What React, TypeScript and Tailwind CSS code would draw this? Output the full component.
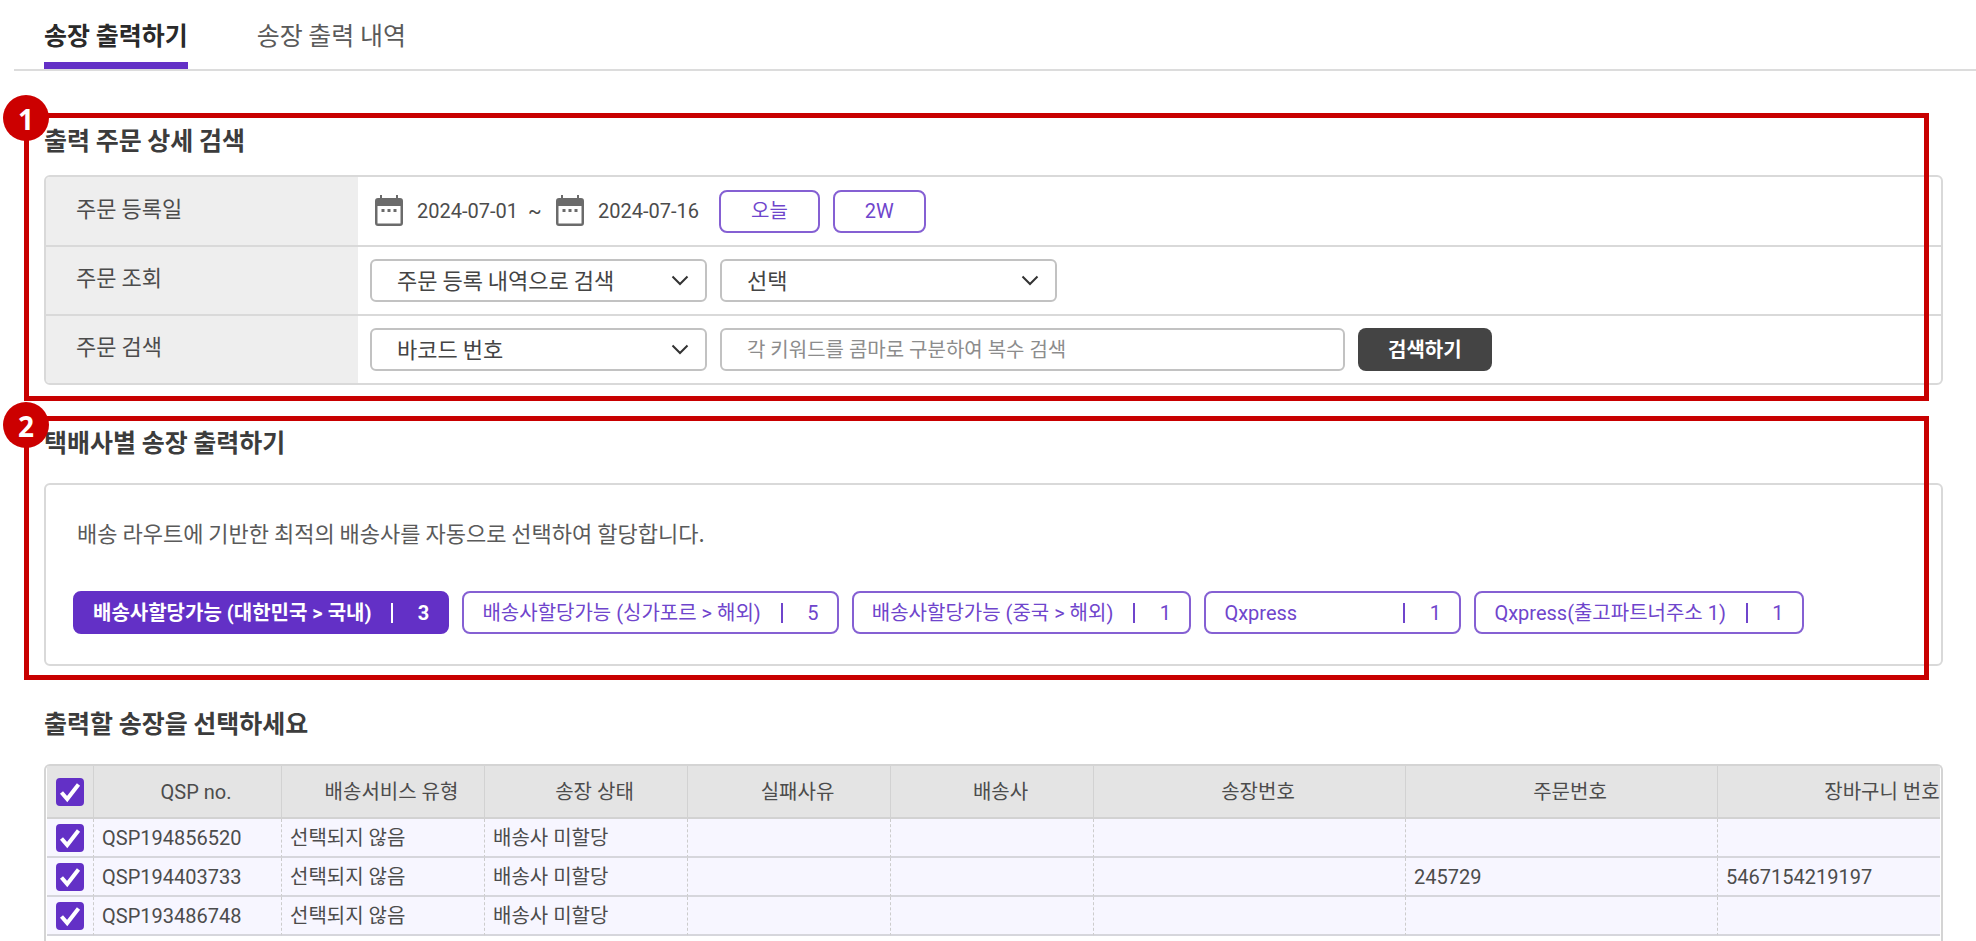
import { useState } from "react";
import type { ReactNode } from "react";
import clsx from "clsx";

type Carrier = {
  label: string;
  count: number;
  wide?: boolean;
};

type Order = {
  qspNo: string;
  serviceType: string;
  status: string;
  failReason?: string;
  carrier?: string;
  invoiceNo?: string;
  orderNo?: string;
  cartNo?: string;
};

const TABS = ["송장 출력하기", "송장 출력 내역"];

const CARRIERS: Carrier[] = [
  { label: "배송사할당가능 (대한민국 > 국내)", count: 3 },
  { label: "배송사할당가능 (싱가포르 > 해외)", count: 5 },
  { label: "배송사할당가능 (중국 > 해외)", count: 1 },
  { label: "Qxpress", count: 1, wide: true },
  { label: "Qxpress(출고파트너주소 1)", count: 1 },
];

const COLUMNS = [
  { title: "QSP no.", width: "w-[188px]" },
  { title: "배송서비스 유형", width: "w-[203px]" },
  { title: "송장 상태", width: "w-[203px]" },
  { title: "실패사유", width: "w-[203px]" },
  { title: "배송사", width: "w-[203px]" },
  { title: "송장번호", width: "w-[312px]" },
  { title: "주문번호", width: "w-[312px]" },
  { title: "장바구니 번호", width: "w-[312px]" },
];

const ORDERS: Order[] = [
  { qspNo: "QSP194856520", serviceType: "선택되지 않음", status: "배송사 미할당" },
  {
    qspNo: "QSP194403733",
    serviceType: "선택되지 않음",
    status: "배송사 미할당",
    orderNo: "245729",
    cartNo: "5467154219197",
  },
  { qspNo: "QSP193486748", serviceType: "선택되지 않음", status: "배송사 미할당" },
];

function CalendarIcon() {
  return (
    <svg width="28" height="32" viewBox="0 0 28 32" aria-hidden="true">
      <path
        fill="#6b6b6b"
        fillRule="evenodd"
        d="M5 0h2v3h14V0h2v3h2a3 3 0 0 1 3 3v22a3 3 0 0 1-3 3H3a3 3 0 0 1-3-3V6a3 3 0 0 1 3-3h2zM2.500 11v17.500h23V11z"
      />
      <path fill="#6b6b6b" d="M6.500 14h3v3h-3zM12.500 14h3v3h-3zM18.500 14h3v3h-3z" />
    </svg>
  );
}

function DateField({ label, value }: { label: string; value: string }) {
  return (
    <label className="flex items-center gap-3.5">
      <CalendarIcon />
      <input
        type="text"
        aria-label={label}
        defaultValue={value}
        className="w-[102px] text-xl text-[#4c4c4c] outline-none"
      />
    </label>
  );
}

function SelectBox({ id, label, options }: { id: string; label: string; options: string[] }) {
  return (
    <div className="relative w-[337px]">
      <select
        id={id}
        aria-label={label}
        className="block h-[43px] w-full appearance-none rounded-md border-2 border-[#c2c2c2] bg-white px-[25px] pb-1 font-[Noto_Sans_CJK_KR,sans-serif] text-[22px] leading-7 text-[#444]"
      >
        {options.map((option) => (
          <option key={option}>{option}</option>
        ))}
      </select>
      <svg
        className="pointer-events-none absolute top-4 right-[18px]"
        width="18"
        height="11"
        viewBox="0 0 18 11"
        fill="none"
        aria-hidden="true"
      >
        <path d="M1.500 1.500 9 9l7.500-7.500" stroke="#333" strokeWidth="2" />
      </svg>
    </div>
  );
}

function OutlineButton({ children }: { children: ReactNode }) {
  return (
    <button
      type="button"
      className="h-[43px] rounded-lg border-2 border-[#8560d3] px-[30px] text-xl text-[#6f45cc]"
    >
      {children}
    </button>
  );
}

function FormRow({ label, htmlFor, children }: { label: string; htmlFor: string; children: ReactNode }) {
  return (
    <div className="flex h-[69px] border-b-2 border-[#d9d9d9] first:h-[70px] last:h-[67px] last:border-b-0">
      <label
        htmlFor={htmlFor}
        className="flex w-[312px] items-center bg-[#eee] pb-2 pl-[30px] font-[Noto_Sans_CJK_KR,sans-serif] text-[22px] text-[#4c4c4c]"
      >
        {label}
      </label>
      <div className="flex flex-1 items-center gap-[13px] pl-3">{children}</div>
    </div>
  );
}

function Heading({ children }: { children: ReactNode }) {
  return (
    <h2 className="font-[Noto_Sans_CJK_KR,sans-serif] text-[25px] leading-9 font-bold text-[#3c3c3c]">
      {children}
    </h2>
  );
}

// Numbered red frame drawn around a section of the guide
function Callout({ no, badge }: { no: number; badge: string }) {
  return (
    <div className="pointer-events-none absolute inset-y-0 right-[47px] left-6 border-[5px] border-[#c80000]">
      <span
        className={clsx(
          "absolute -left-[26px] flex size-[46px] items-center justify-center rounded-full bg-[#cc0000] pt-0.5 font-[Noto_Sans,sans-serif] text-[28px] leading-none font-bold text-white",
          badge,
        )}
      >
        {no}
      </span>
    </div>
  );
}

function CheckBox({ label }: { label: string }) {
  return (
    <span className="relative mx-auto block size-7">
      <input
        type="checkbox"
        defaultChecked
        aria-label={label}
        className="peer block size-7 appearance-none rounded-sm border-2 border-[#6330c6] bg-white checked:bg-[#6330c6]"
      />
      <svg
        className="pointer-events-none absolute inset-0 hidden peer-checked:block"
        width="28"
        height="28"
        viewBox="0 0 28 28"
        fill="none"
        aria-hidden="true"
      >
        <path d="m5.500 14.500 5.700 6.500L22.500 6.500" stroke="#fff" strokeWidth="4" />
      </svg>
    </span>
  );
}

function CarrierButton({
  carrier,
  active,
  onClick,
}: {
  carrier: Carrier;
  active: boolean;
  onClick: () => void;
}) {
  return (
    <button
      type="button"
      onClick={onClick}
      className={clsx(
        "flex h-[43px] items-center rounded-lg border-2 px-[18px] text-xl whitespace-nowrap",
        active
          ? "border-[#6330c6] bg-[#6330c6] font-bold text-white"
          : "border-[#8560d3] bg-white text-[#6f45cc]",
      )}
    >
      <span className={clsx("text-left", carrier.wide && "w-[159px]")}>{carrier.label}</span>
      <span className="ml-5 h-5 w-0.5 bg-current" />
      <span className="ml-6 w-3">{carrier.count}</span>
    </button>
  );
}

export default function App() {
  const [tab, setTab] = useState<number>(0);
  const [carrier, setCarrier] = useState<number>(0);

  return (
    <div className="flex min-h-screen flex-col overflow-hidden bg-white font-[Roboto,Noto_Sans_CJK_KR,sans-serif]">
      <nav className="ml-3.5 flex h-[71px] gap-[69px] border-b-2 border-[#dcdcdc] pl-[30px] font-[Noto_Sans_CJK_KR,sans-serif]">
        {TABS.map((title, index) => (
          <button
            key={title}
            type="button"
            onClick={() => setTab(index)}
            className={clsx(
              "border-b-[7px] pt-2 text-[25px]",
              tab === index
                ? "border-[#6330c6] font-bold text-[#2a2a2a]"
                : "border-transparent text-[#5a5a5a]",
            )}
          >
            {title}
          </button>
        ))}
      </nav>

      <section className="relative mt-[42px] pt-2 pr-[33px] pb-4 pl-11">
        <Heading>출력 주문 상세 검색</Heading>
        <form className="mt-[18px] overflow-hidden rounded-md border-2 border-[#d9d9d9]">
          <FormRow label="주문 등록일" htmlFor="order-date">
            <div id="order-date" className="flex items-center gap-[9px] pr-1.5 pl-[5px]">
              <DateField label="시작일" value="2024-07-01" />
              <span className="w-[19px] text-xl text-[#4c4c4c]">~</span>
              <DateField label="종료일" value="2024-07-16" />
            </div>
            <OutlineButton>오늘</OutlineButton>
            <OutlineButton>2W</OutlineButton>
          </FormRow>
          <FormRow label="주문 조회" htmlFor="order-lookup">
            <SelectBox id="order-lookup" label="주문 조회" options={["주문 등록 내역으로 검색"]} />
            <SelectBox id="order-lookup-value" label="조회 값" options={["선택"]} />
          </FormRow>
          <FormRow label="주문 검색" htmlFor="order-search">
            <SelectBox id="order-search" label="주문 검색" options={["바코드 번호"]} />
            <input
              type="text"
              aria-label="검색어"
              placeholder="각 키워드를 콤마로 구분하여 복수 검색"
              className="h-[43px] w-[625px] rounded-md border-2 border-[#c2c2c2] px-[25px] text-xl placeholder:text-[#8c8c8c]"
            />
            <button
              type="button"
              className="h-[43px] rounded-lg bg-[#444] px-[30px] text-xl font-bold text-white"
            >
              검색하기
            </button>
          </FormRow>
        </form>
        <Callout no={1} badge="-top-[23px]" />
      </section>

      <section className="relative mt-[15px] pt-[7px] pr-[33px] pb-3.5 pl-11">
        <Heading>택배사별 송장 출력하기</Heading>
        <div className="mt-6 rounded-md border-2 border-[#d9d9d9] px-[27px] pt-[31px] pb-[30px]">
          <p className="pl-1 font-[Noto_Sans_CJK_KR,sans-serif] text-[22px] leading-8 text-[#5a5a5a]">
            배송 라우트에 기반한 최적의 배송사를 자동으로 선택하여 할당합니다.
          </p>
          <div className="mt-[43px] flex flex-wrap gap-[13px]">
            {CARRIERS.map((item, index) => (
              <CarrierButton
                key={item.label}
                carrier={item}
                active={carrier === index}
                onClick={() => setCarrier(index)}
              />
            ))}
          </div>
        </div>
        <Callout no={2} badge="-top-[19px]" />
      </section>

      <section className="mt-6 flex flex-1 flex-col pr-[33px] pl-11">
        <Heading>출력할 송장을 선택하세요</Heading>
        <div className="mt-6 flex-1 rounded-t-md border-2 border-b-0 border-[#d4d4d4] px-px">
          <div className="overflow-hidden">
            <table className="w-[1983px] table-fixed border-separate border-spacing-0 text-xl text-[#4c4c4c]">
              <thead>
                <tr className="h-[53px] bg-[#e4e4e4]">
                  <th className="w-[47px] border-r border-b-2 border-[#d2d2d2] p-0">
                    <CheckBox label="전체 선택" />
                  </th>
                  {COLUMNS.map((column) => (
                    <th
                      key={column.title}
                      className={clsx(
                        "border-r border-b-2 border-[#d2d2d2] p-0 pl-[17px] text-center font-normal",
                        column.width,
                      )}
                    >
                      {column.title}
                    </th>
                  ))}
                </tr>
              </thead>
              <tbody>
                {ORDERS.map((order) => (
                  <tr key={order.qspNo} className="h-[39px] bg-[#f7f6ff]">
                    <td className="border-r border-b-2 border-r-[#ccc] border-b-[#d6d6dc] p-0 [border-right-style:dashed]">
                      <CheckBox label={order.qspNo} />
                    </td>
                    {[
                      order.qspNo,
                      order.serviceType,
                      order.status,
                      order.failReason,
                      order.carrier,
                      order.invoiceNo,
                      order.orderNo,
                      order.cartNo,
                    ].map((value, index) => (
                      <td
                        key={index}
                        className="border-r border-b-2 border-r-[#ccc] border-b-[#d6d6dc] p-0 pl-2 [border-right-style:dashed]"
                      >
                        {value}
                      </td>
                    ))}
                  </tr>
                ))}
              </tbody>
            </table>
          </div>
        </div>
      </section>
    </div>
  );
}
